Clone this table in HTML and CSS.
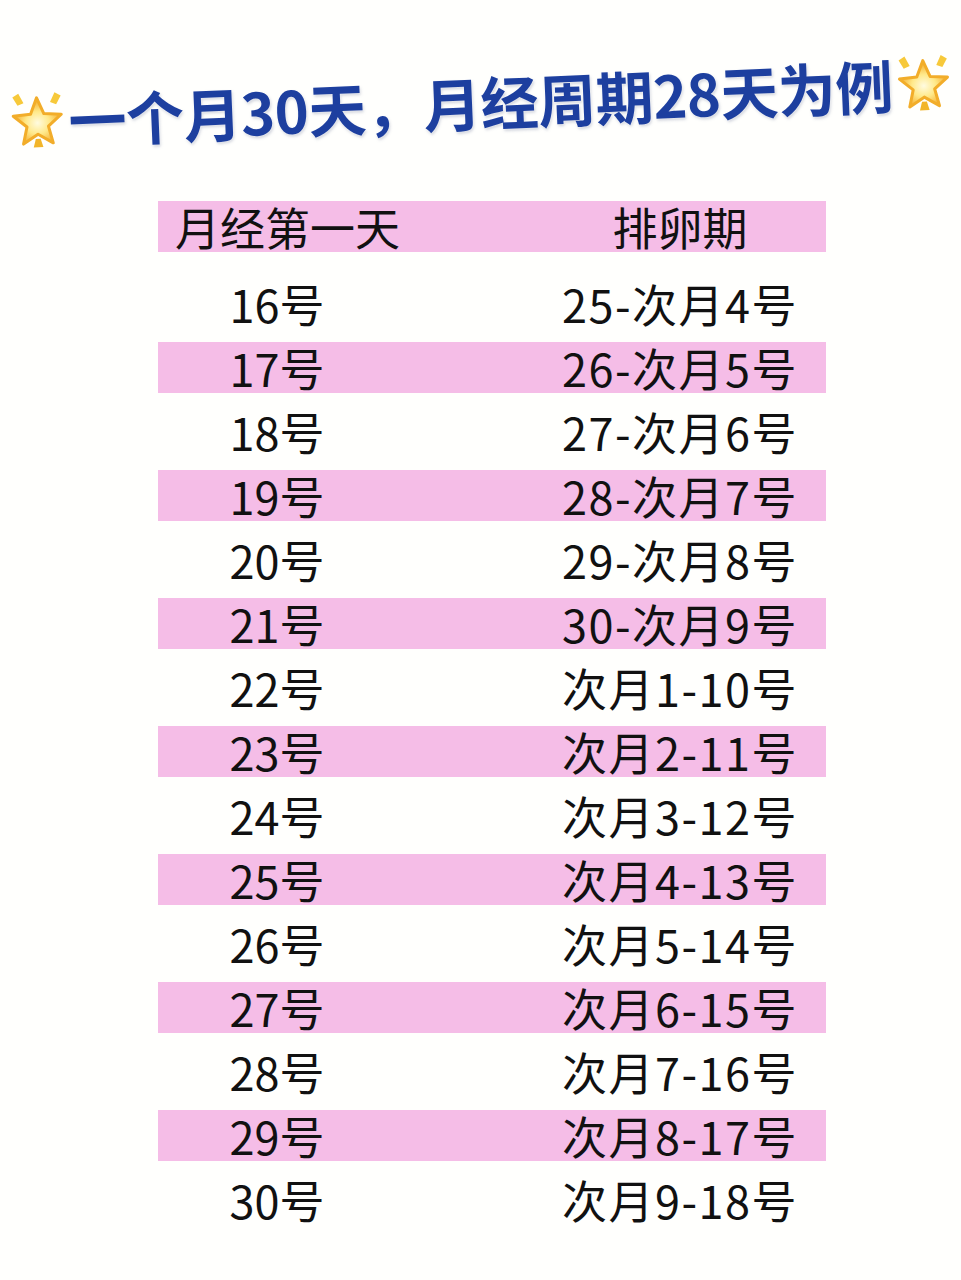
FILE: index.html
```html
<!DOCTYPE html>
<html lang="zh-CN">
<head>
<meta charset="utf-8">
<title>一个月30天，月经周期28天为例</title>
<link rel="stylesheet" href="styles.css">
</head>
<body>
<div class="page">
  <h1 class="title">
    <svg class="star" viewBox="0 0 48 48" aria-hidden="true">
      <defs>
        <radialGradient id="sg1" cx="50%" cy="55%" r="55%">
          <stop offset="0" stop-color="#fffbe0"/>
          <stop offset="0.45" stop-color="#ffe98a"/>
          <stop offset="1" stop-color="#f2a21e"/>
        </radialGradient>
      </defs>
      <polygon points="4,5 9,2 13,10 8,12" fill="#f7c93a"/>
      <polygon points="44,5 39,2 35,10 40,12" fill="#f7c93a"/>
      <polygon points="22,40 26,40 28,47 20,47" fill="#f2b52a"/>
      <path d="M24 6 L29.5 19.3 L43.9 20.4 L32.9 29.8 L36.3 43.8 L24 36.2 L11.7 43.8 L15.1 29.8 L4.1 20.4 L18.5 19.3 Z" fill="url(#sg1)" stroke="#f2ad2a" stroke-width="2.5" stroke-linejoin="round"/>
    </svg>
    <span class="title-text">一个月30天，月经周期28天为例</span>
    <svg class="star" viewBox="0 0 48 48" aria-hidden="true">
      <defs>
        <radialGradient id="sg2" cx="50%" cy="55%" r="55%">
          <stop offset="0" stop-color="#fffbe0"/>
          <stop offset="0.45" stop-color="#ffe98a"/>
          <stop offset="1" stop-color="#f2a21e"/>
        </radialGradient>
      </defs>
      <polygon points="4,5 9,2 13,10 8,12" fill="#f7c93a"/>
      <polygon points="44,5 39,2 35,10 40,12" fill="#f7c93a"/>
      <polygon points="22,40 26,40 28,47 20,47" fill="#f2b52a"/>
      <path d="M24 6 L29.5 19.3 L43.9 20.4 L32.9 29.8 L36.3 43.8 L24 36.2 L11.7 43.8 L15.1 29.8 L4.1 20.4 L18.5 19.3 Z" fill="url(#sg2)" stroke="#f2ad2a" stroke-width="2.5" stroke-linejoin="round"/>
    </svg>
  </h1>

  <div class="table">
    <div class="row head"><span class="c1">月经第一天</span><span class="c2">排卵期</span></div>
    <div class="row"><span class="c1">16号</span><span class="c2">25-次月4号</span></div>
    <div class="row pink"><span class="c1">17号</span><span class="c2">26-次月5号</span></div>
    <div class="row"><span class="c1">18号</span><span class="c2">27-次月6号</span></div>
    <div class="row pink"><span class="c1">19号</span><span class="c2">28-次月7号</span></div>
    <div class="row"><span class="c1">20号</span><span class="c2">29-次月8号</span></div>
    <div class="row pink"><span class="c1">21号</span><span class="c2">30-次月9号</span></div>
    <div class="row"><span class="c1">22号</span><span class="c2">次月1-10号</span></div>
    <div class="row pink"><span class="c1">23号</span><span class="c2">次月2-11号</span></div>
    <div class="row"><span class="c1">24号</span><span class="c2">次月3-12号</span></div>
    <div class="row pink"><span class="c1">25号</span><span class="c2">次月4-13号</span></div>
    <div class="row"><span class="c1">26号</span><span class="c2">次月5-14号</span></div>
    <div class="row pink"><span class="c1">27号</span><span class="c2">次月6-15号</span></div>
    <div class="row"><span class="c1">28号</span><span class="c2">次月7-16号</span></div>
    <div class="row pink"><span class="c1">29号</span><span class="c2">次月8-17号</span></div>
    <div class="row"><span class="c1">30号</span><span class="c2">次月9-18号</span></div>
  </div>
</div>
</body>
</html>
```
FILE: styles.css
```css
html, body {
  margin: 0;
  padding: 0;
  background: #fffffd;
}

.page {
  width: 961px;
  height: 1280px;
  overflow: hidden;
  font-family: "Noto Sans CJK SC", "Noto Sans", sans-serif;
  color: #111111;
}

.title {
  margin: 0;
  padding-top: 68px;
  height: 66px;
  display: flex;
  align-items: center;
  justify-content: center;
  gap: 2px;
  transform: rotate(-2.4deg);
  transform-origin: 480px 100px;
}

.star {
  width: 58px;
  height: 58px;
  flex: none;
}

.title-text {
  font-size: 58px;
  font-weight: 700;
  color: #1d3f9f;
  letter-spacing: -0.5px;
  line-height: 66px;
  white-space: nowrap;
  text-shadow: 0 0 2px #ffffff, 1px 2px 3px rgba(120, 130, 160, 0.35);
}

.table {
  margin: 67px 0 0 158px;
  width: 668px;
  display: flex;
  flex-direction: column;
  gap: 13px;
}

.row {
  height: 51px;
  display: flex;
  justify-content: space-between;
  align-items: center;
  font-size: 45px;
  line-height: 51px;
  white-space: nowrap;
}

.row.head {
  background: #f5bde7;
  margin-bottom: 13px;
}

.row.pink {
  background: #f5bde7;
}

.c1 {
  width: 238px;
  text-align: center;
}

.c2 {
  width: 292px;
  text-align: center;
  letter-spacing: 1.5px;
}

.head .c1 {
  text-align: left;
  padding-left: 17px;
  box-sizing: border-box;
}

.head .c2 {
  letter-spacing: 0;
}
```
